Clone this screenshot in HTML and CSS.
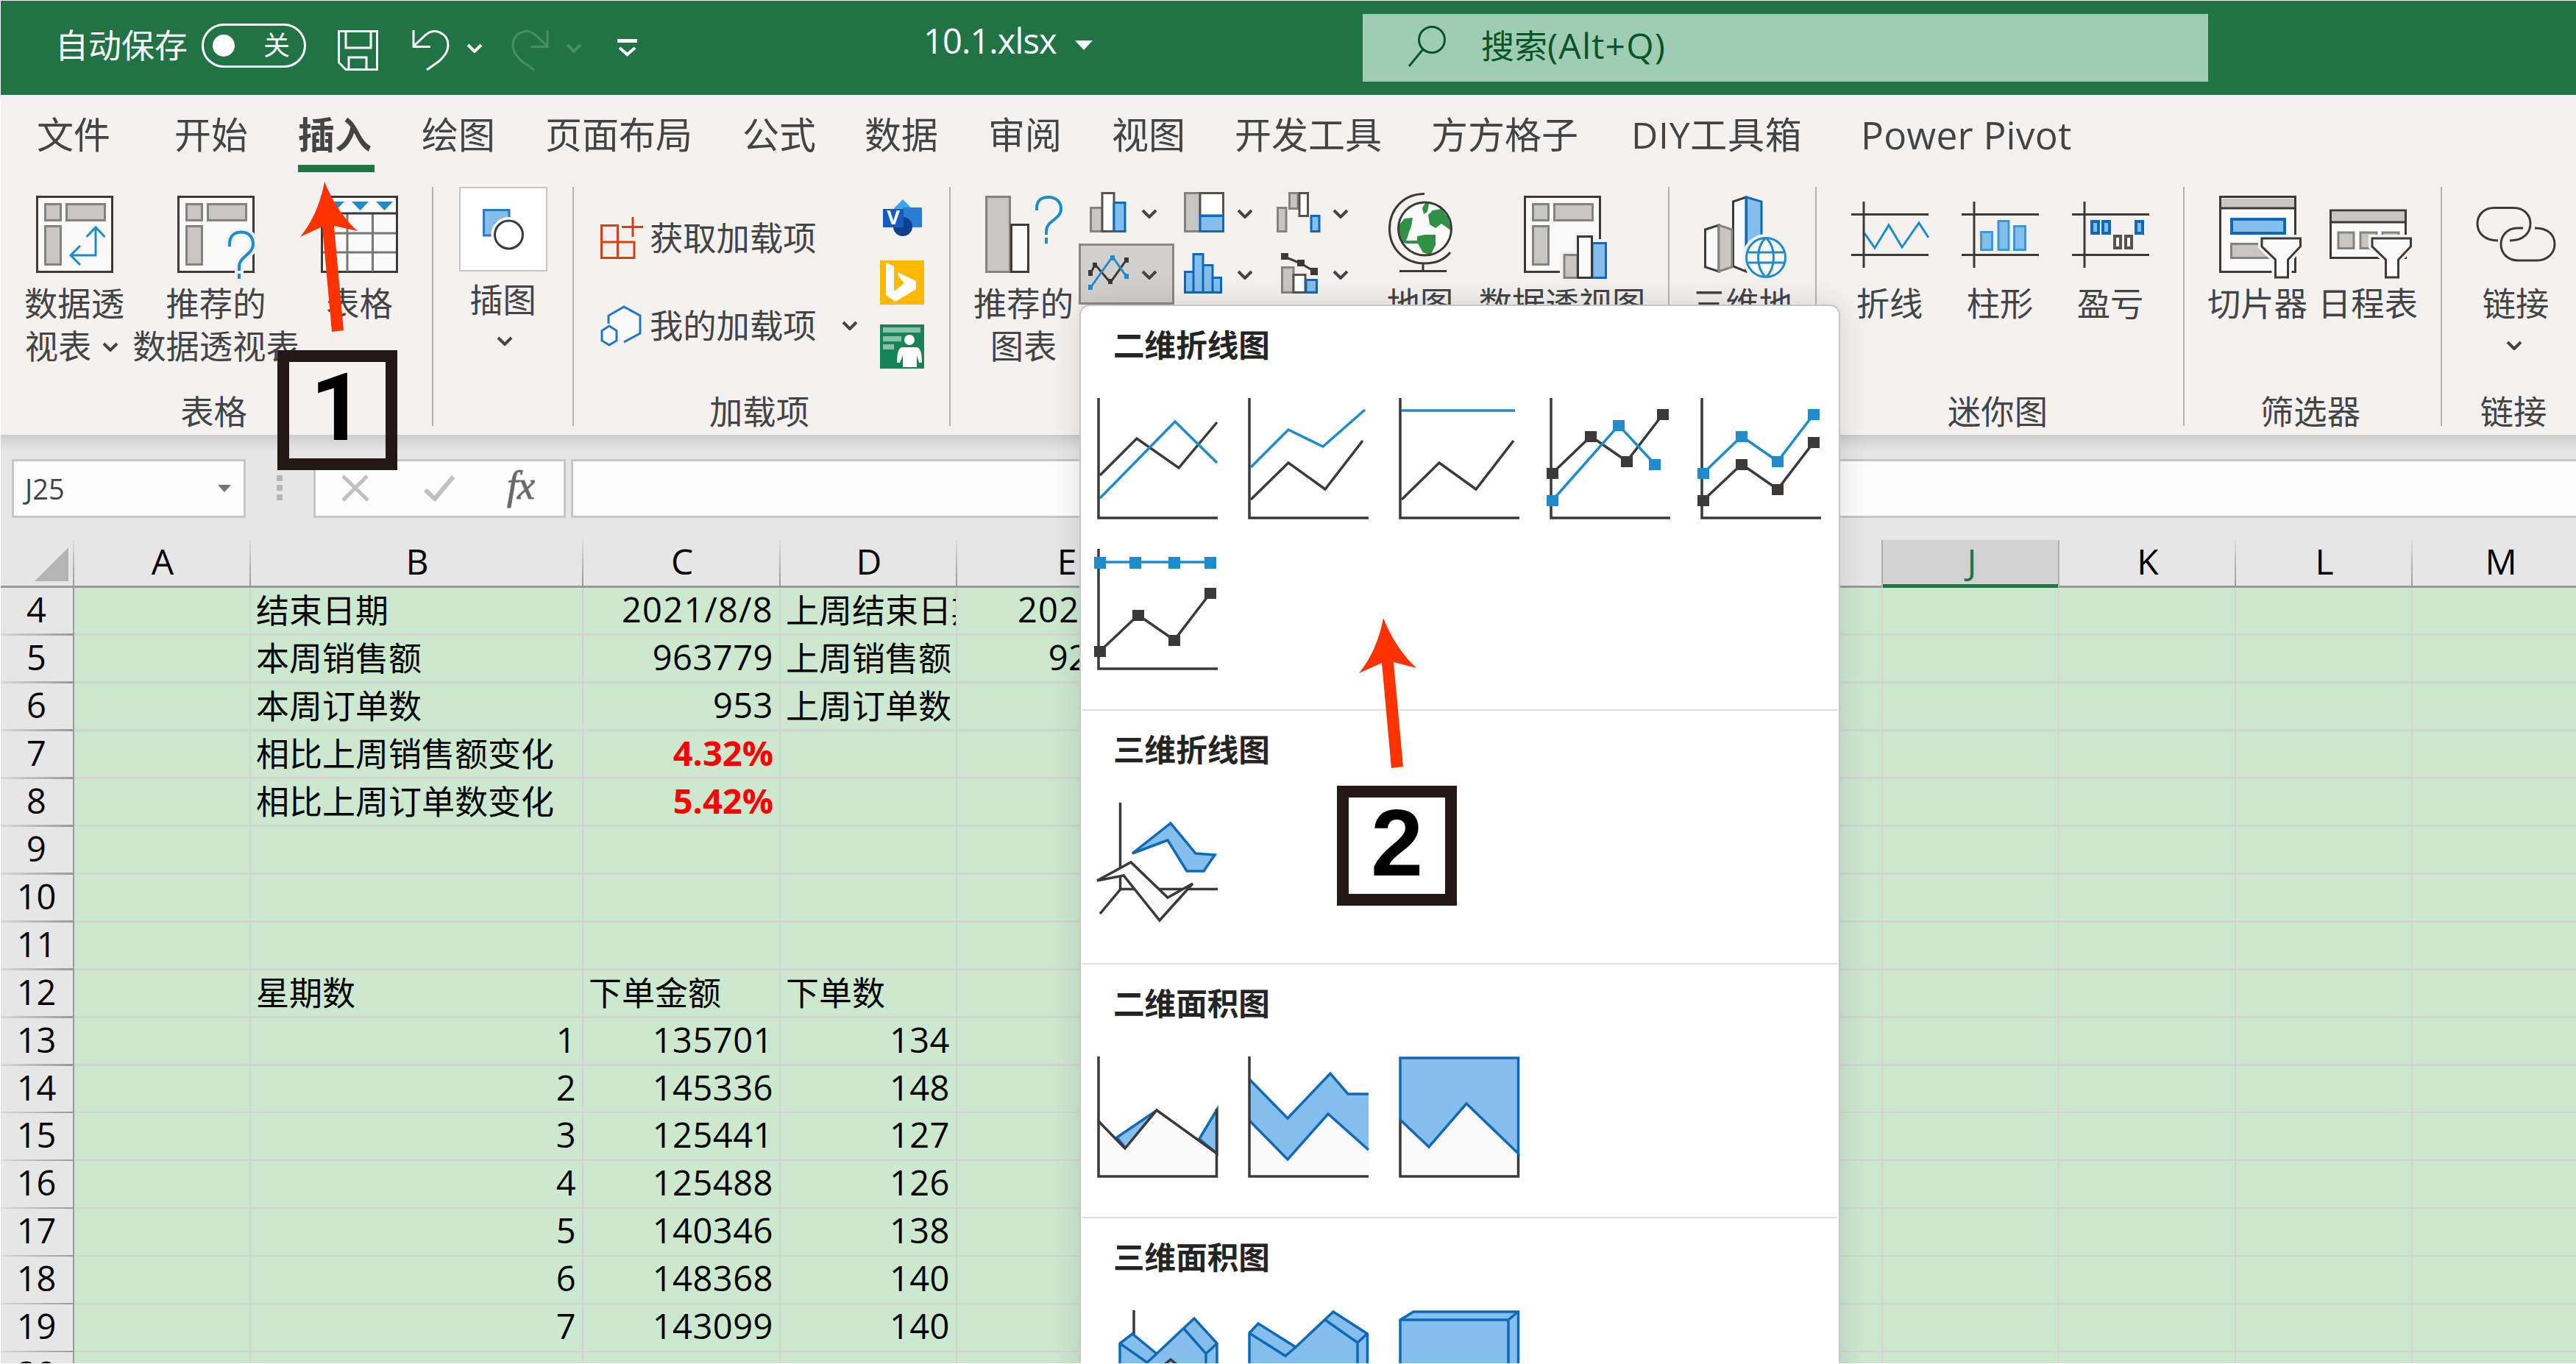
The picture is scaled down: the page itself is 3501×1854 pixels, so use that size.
FILE: index.html
```html
<!DOCTYPE html>
<html lang="zh-CN">
<head>
<meta charset="utf-8">
<title>10.1.xlsx</title>
<link rel="stylesheet" href="styles.css">
</head>
<body>
<svg class="defs" width="0" height="0">
  <symbol id="chev" viewBox="0 0 22 13"><path d="M2 2L11 11L20 2" fill="none" stroke="currentColor" stroke-width="4"/></symbol>
  <symbol id="pivot" viewBox="0 0 105 105">
    <path class="pl" d="M1.5 1.5H103.5V103.5H1.5Z"/>
    <path class="gr" d="M12.500 11.500H33.500V33.500H12.500ZM41.500 11.500H93.500V33.500H41.500ZM12.500 41.500H33.500V93.500H12.500Z"/>
  </symbol>
  <symbol id="frame" viewBox="0 0 105 118"><path class="dk" d="M17 8V98M0 25.500H105M0 80.500H105"/></symbol>
  <symbol id="funnel" viewBox="0 0 120 118"><path d="M58 58H110.500V69L93.500 87V111H76.500V87L58 69Z" class="halo"/><path class="pl" d="M58 58H110.500V69L93.500 87V111H76.500V87L58 69Z"/></symbol>
</svg>
<div class="app">
  <header class="titlebar">
    <span class="autosave">自动保存</span>
    <span class="toggle"><i class="knob"></i><b>关</b></span>
    <svg class="ti" width="55" height="55"><path class="w" d="M1.500 1.500H53.500V53.500H11L1.500 44ZM11 2V24H45V2M15 53V37H39V53"/></svg>
    <svg class="ti" width="52" height="55"><path class="w" d="M2 0V22.500H25M2 22L19 6C32 -4 49 5 49 20C49 30 43 36 37 42L20 54"/></svg>
    <svg class="tc" width="22" height="13"><use href="#chev"/></svg>
    <svg class="ti dim" width="52" height="55"><path class="w" d="M49 0V22.500H26M49 22L32 6C19 -4 2 5 2 20C2 30 8 36 14 42L31 54"/></svg>
    <svg class="tc dim" width="22" height="13"><use href="#chev"/></svg>
    <svg class="tc" width="27" height="24"><path d="M0 0H27V5H0Z" fill="#fff"/><path d="M3 12L13.500 21L24 12" fill="none" stroke="#fff" stroke-width="4"/></svg>
    <span class="fname">10.1.xlsx</span>
    <svg width="25" height="13"><path d="M0 0H24L12 13Z" fill="#fff"/></svg>
    <div class="search">
      <svg width="54" height="58"><circle cx="33" cy="20" r="17.500"/><path d="M21 33L2 56"/></svg>
      <span>搜索<em>(Alt+Q)</em></span>
    </div>
  </header>

  <nav class="tabs">
    <a>文件</a><a>开始</a><a class="on">插入</a><a>绘图</a><a>页面布局</a><a>公式</a><a>数据</a><a>审阅</a><a>视图</a><a>开发工具</a><a>方方格子</a><a class="diy">DIY工具箱</a><a class="lat">Power Pivot</a>
  </nav>

  <div class="ribbon">
    <section class="group g1">
      <div class="body">
        <div class="btn b160">
          <svg class="ic" width="105" height="118"><use href="#pivot" width="105" height="105"/><path class="bl" d="M81 43V81H47M68.500 56L81 43L93.500 56M60 68L47 81L60 94"/></svg>
          <span>数据透</span><span class="more">视表<svg width="22" height="13"><use href="#chev"/></svg></span>
        </div>
        <div class="btn b225">
          <svg class="ic" width="105" height="118"><use href="#pivot" width="105" height="105"/><path fill="none" stroke="#f3f2f1" stroke-width="12" d="M71 69V66C71 54 78 49.500 87 49.500C97 49.500 103 56 103 66C103 80 84 82 84 97V114"/><path class="bl w4" d="M71 69V66C71 54 78 49.500 87 49.500C97 49.500 103 56 103 66C103 80 84 82 84 97V102M84 106V113"/></svg>
          <span>推荐的</span><span>数据透视表</span>
        </div>
        <div class="btn b165">
          <svg class="ic" width="105" height="118"><path class="pl" d="M1.500 1.500H103.500V103.500H1.500Z"/><path d="M3 51H102M3 77H102M36 25V103M70.500 25V103" stroke="#797774" stroke-width="3"/><path class="dk" d="M2 24H103"/><path d="M9 8H32L20.500 20ZM42 8H65L53.500 20ZM75 8H98L86.500 20Z" fill="#1e8bcd"/></svg>
          <span>表格</span>
        </div>
      </div>
      <footer>表格</footer>
    </section>

    <section class="group g2">
      <div class="body">
        <div class="btn illus">
          <svg class="tile" width="120" height="115"><path d="M33.500 31.500H68V50H50V66H33.500Z" fill="#83beec" stroke="#2a7ac4" stroke-width="3"/><circle cx="67.500" cy="65" r="24" fill="#fff"/><circle cx="67.500" cy="65" r="19" fill="#fff" stroke="#3b3a38" stroke-width="3"/></svg>
          <span>插图</span><svg class="dn" width="22" height="13"><use href="#chev"/></svg>
        </div>
      </div>
      <footer></footer>
    </section>

    <section class="group g3">
      <div class="body">
        <div class="addins">
          <div class="line"><svg width="60" height="58"><path d="M1.500 11.500H23.500V55.500H1.500ZM1.500 34H46V55.500H23.500V34M44 0V27M29 13.500H58" fill="none" stroke="#d9400a" stroke-width="3"/></svg><span>获取加载项</span></div>
          <div class="line"><svg width="60" height="56"><path d="M11 25V14L32 2L54 14V38L32 50" fill="#fafafa" stroke="#1e78c8" stroke-width="3"/><path d="M12 28L22 34.500V48L12 54L2 48V34.500Z" fill="#fafafa" stroke="#1e78c8" stroke-width="3"/></svg><span>我的加载项</span><svg class="mr" width="22" height="13"><use href="#chev"/></svg></div>
        </div>
        <div class="apps">
          <svg width="60" height="60"><path d="M31 5L43 17V36H19V17Z" fill="#41a5ee"/><path d="M31 16H57V43H31Z" fill="#2b7cd3"/><circle cx="31" cy="42" r="13" fill="#103f91"/><path d="M4 18H32V43H4Z" fill="#185abd"/><text x="18" y="39" class="vs">V</text></svg>
          <svg width="60" height="60"><path d="M0 0H60V60H0Z" fill="#ffb900"/><path d="M8 3L19 8V40L29 34L24 28V16L49 28V39L21 56L8 47Z" fill="#fff"/><path d="M19 24L24 20L33 31L19 42Z" fill="#ffb900"/></svg>
          <svg width="60" height="60"><path d="M0 0H60V60H0Z" fill="#178457"/><path d="M4 4H55V11H4ZM4 16H29V23H4ZM4 27H19V34H4Z" fill="#8bc1ab"/><circle cx="40" cy="21" r="7" fill="#fff"/><path d="M30 31H50Q57 32 57 52H53L50 42V58H31V42L27 52H23Q23 32 30 31Z" fill="#fff"/></svg>
        </div>
      </div>
      <footer>加载项</footer>
    </section>

    <section class="group g4">
      <div class="body">
        <div class="btn b144">
          <svg class="ic" width="105" height="118"><path class="gr" d="M1.500 1.500H33.500V103.500H1.500Z"/><path class="pl" d="M35.500 39.500H58.500V103.500H35.500Z"/><path class="bl w4" d="M70 20V17C70 6 77 2 86 2C96 2 103 8 103 18C103 32 83 34 83 48V53M83 57V65"/></svg>
          <span>推荐的</span><span>图表</span>
        </div>
        <div class="minis">
          <svg width="130" height="83"><path class="gr" d="M16.500 34.500H32V66.500H16.500Z"/><path class="wh" d="M32 14.500H48V66.500H32Z"/><path class="bf" d="M48 27.500H63V66.500H48Z"/><use href="#chev" x="85" y="36" width="22" height="13"/></svg>
          <svg width="130" height="83"><path class="gr" d="M14.500 14.500H35V66.500H14.500Z"/><path class="wh" d="M35 14.500H66.500V45H35Z"/><path class="bf" d="M35 45.500H66.500V66.500H35Z"/><use href="#chev" x="85" y="36" width="22" height="13"/></svg>
          <svg width="130" height="83"><path class="gr" d="M10.500 34.500H22V66.500H10.500ZM26.500 14.500H38V35.500H26.500Z"/><path class="wh" d="M40 14.500H51.500V45.500H40Z"/><path class="bf" d="M56 45.500H67V66.500H56Z"/><use href="#chev" x="85" y="36" width="22" height="13"/></svg>
          <svg class="sel" width="130" height="83"><path class="dk" d="M16 42L22 28L43 53L65 22"/><path class="bl" d="M16 60L46 18L65 45"/><path d="M13 36H19V44H13ZM19 26H25V33H19ZM40 48H46V55H40ZM62 19H68V26H62Z" fill="#3b3a38"/><path d="M13 56H19V63H13ZM43 16H49V23H43ZM62 41H68V48H62Z" fill="#1e8bcd"/><use href="#chev" x="85" y="36" width="22" height="13"/></svg>
          <svg width="130" height="83"><path class="bf" d="M14.500 38.500H26V66.500H14.500ZM26 14.500H39V66.500H26ZM39 29.500H52V66.500H39ZM52 46.500H63.500V66.500H52Z"/><use href="#chev" x="85" y="36" width="22" height="13"/></svg>
          <svg width="130" height="83"><path class="gr" d="M16.500 32.500H32V66.500H16.500Z"/><path class="wh" d="M32 42.500H48V66.500H32Z"/><path class="bf" d="M49 49.500H63.500V66.500H49Z"/><path class="dk" d="M20 18L42 27L60 38"/><path d="M15 13H25V22H15ZM37 22H47V31H37ZM55 33H65V43H55Z" fill="#3b3a38"/><use href="#chev" x="85" y="36" width="22" height="13"/></svg>
        </div>
        <div class="btn b128">
          <svg class="ic" width="87" height="118"><g transform="translate(0 -5)"><circle cx="49.500" cy="50" r="36" fill="#fafafa"/><path fill="#2f9146" d="M50 15L55 16L53 27L48 30L46 22ZM54 31L60 25L72 23L81 35L86 53L79 48L72 43L64 49L56 44ZM15 44L22 36L33 35L31 47L28 54L26 61L24 66L39 66V60L50 58L64 58L64 72L57 86L47 82L40 70L24 70L18 68L13 52Z"/><circle cx="49.500" cy="50" r="36" fill="none" stroke="#3b3a38" stroke-width="3"/><path class="dk" d="M49 2.500C20 2.500 1.500 24 1.500 50C1.500 77 22 97 49 97C64 97 76 92 84 82M47 97V106M15 107.500H79"/></g></svg>
          <span>地图</span>
        </div>
        <div class="btn b258">
          <svg class="ic" width="105" height="118"><use href="#pivot" width="105" height="105"/><path d="M49 75H69V49H98V59H118V118H49Z" fill="#f3f2f1"/><path class="gr" d="M55 80.500H73V111.500H55Z"/><path class="bf" d="M93 64.500H111.500V111.500H93Z"/><path class="pl" d="M73.500 55.500H92.500V111.500H73.500Z"/></svg>
          <span>数据透视图</span>
        </div>
      </div>
      <footer></footer>
    </section>

    <section class="group g5">
      <div class="body">
        <div class="btn b200">
          <svg class="ic" width="105" height="118"><path class="pl" d="M39.500 8L57 2V103L39.500 96Z"/><path class="pl" d="M1.500 46L20 40V103L1.500 97Z"/><path class="gr" d="M20 40L38 46V97L20 103Z"/><path class="bf" d="M57.500 2L78 8V80H57.500Z"/><circle cx="84" cy="84" r="32" fill="#f3f2f1"/><circle cx="84" cy="84" r="26.500" fill="#fafafa"/><path class="bl" d="M57.500 84A26.500 26.500 0 1 0 110.500 84A26.500 26.500 0 1 0 57.500 84M84 57C70 70 70 98 84 111M84 57C98 70 98 98 84 111M60 77H108M60 91H108"/></svg>
          <span>三维地</span><span>图</span>
        </div>
      </div>
      <footer></footer>
    </section>

    <section class="group g6">
      <div class="body">
        <div class="btn b150"><svg class="ic" width="105" height="118"><path class="bl" d="M18 51L32 71L51 40L69 70L92 37L105 57"/><use href="#frame"/></svg><span>折线</span></div>
        <div class="btn b150"><svg class="ic" width="105" height="118"><use href="#frame"/><path class="bf lt" d="M26.500 49.500H41.500V73.500H26.500ZM50 34.500H64V73.500H50ZM71.500 41.500H86.500V73.500H71.500Z"/></svg><span>柱形</span></div>
        <div class="btn b150"><svg class="ic" width="105" height="118"><use href="#frame"/><path class="bf w4" d="M27 35H36V51H27ZM42 35H51V51H42ZM87 35H96V51H87Z"/><path class="wh w4" d="M58 55H66V71H58ZM73 55H81V71H73Z"/></svg><span>盈亏</span></div>
      </div>
      <footer>迷你图</footer>
    </section>

    <section class="group g7">
      <div class="body">
        <div class="btn b150"><svg class="ic" width="105" height="118"><path class="pl" d="M1.500 1.500H103.500V103.500H1.500Z"/><path d="M3 4H102V16H3Z" fill="#c8c6c4"/><path class="dk" d="M2 17H103"/><path class="bf w4" d="M17 32H89V51H17Z"/><path class="gr" d="M16.500 65.500H89V84.500H16.500Z"/><use href="#funnel" width="120" height="118"/></svg><span>切片器</span></div>
        <div class="btn b150"><svg class="ic" width="105" height="118"><path class="pl" d="M1.500 20H103.500V84.500H1.500Z"/><path d="M3 22H102V35H3Z" fill="#c8c6c4"/><path class="dk" d="M2 36H103"/><path class="gr" d="M12 50H33V71.500H12ZM42 50H64V71.500H42ZM72 50H94V71.500H72Z"/><use href="#funnel" width="120" height="118"/></svg><span>日程表</span></div>
      </div>
      <footer>筛选器</footer>
    </section>

    <section class="group g8">
      <div class="body">
        <div class="btn b200">
          <svg class="ic" width="108" height="118"><path class="dk" d="M30 61C12 61 2 51 2 38C2 25 12 16.500 25 16.500H51C64 16.500 74 25 74 38C74 51 64 61 46 61M64 44H56C43 44 34 54 34 66C34 79 44 88 57 88H83C96 88 107 79 107 66C107 53 98 44 80 44"/></svg>
          <span>链接</span><svg class="dn lk" width="22" height="13"><use href="#chev"/></svg>
        </div>
      </div>
      <footer>链接</footer>
    </section>
  </div>

  <div class="fbar">
    <div class="namebox"><span>J25</span><svg width="18" height="10"><path d="M0 0H18L9 10Z" fill="#777"/></svg></div>
    <div class="dots"><i></i><i></i><i></i></div>
    <div class="fx">
      <svg width="38" height="36"><path d="M2 1L36 34M35 1L2 34" stroke="#c0c0c0" stroke-width="5" fill="none"/></svg>
      <svg width="42" height="36"><path d="M2 20L15 32L40 2" stroke="#c0c0c0" stroke-width="6" fill="none"/></svg>
      <em>fx</em>
    </div>
    <div class="formula"></div>
  </div>

  <div class="sheet">
    <div class="row heads">
      <span class="corner"><svg width="46" height="46"><path d="M46 0V46H0Z" fill="#b4b4b4"/></svg></span>
      <span>A</span><span>B</span><span>C</span><span>D</span><span>E</span><span>F</span><span>G</span><span>H</span><span>I</span><span class="cur">J</span><span>K</span><span>L</span><span>M</span>
    </div>
    <div class="row"><b>4</b><span class="c2">结束日期</span><span class="c3 n date">2021/8/8</span><span class="c4 clip">上周结束日期</span><span class="c5 n date">2021/8/1</span></div>
    <div class="row"><b>5</b><span class="c2">本周销售额</span><span class="c3 n">963779</span><span class="c4">上周销售额</span><span class="c5 n">923868</span></div>
    <div class="row"><b>6</b><span class="c2">本周订单数</span><span class="c3 n">953</span><span class="c4">上周订单数</span></div>
    <div class="row"><b>7</b><span class="c2">相比上周销售额变化</span><span class="c3 n red">4.32%</span></div>
    <div class="row"><b>8</b><span class="c2">相比上周订单数变化</span><span class="c3 n red">5.42%</span></div>
    <div class="row"><b>9</b></div>
    <div class="row"><b>10</b></div>
    <div class="row"><b>11</b></div>
    <div class="row"><b>12</b><span class="c2">星期数</span><span class="c3">下单金额</span><span class="c4">下单数</span></div>
    <div class="row"><b>13</b><span class="c2 n">1</span><span class="c3 n">135701</span><span class="c4 n">134</span></div>
    <div class="row thin"><b>14</b><span class="c2 n">2</span><span class="c3 n">145336</span><span class="c4 n">148</span></div>
    <div class="row thin"><b>15</b><span class="c2 n">3</span><span class="c3 n">125441</span><span class="c4 n">127</span></div>
    <div class="row thin"><b>16</b><span class="c2 n">4</span><span class="c3 n">125488</span><span class="c4 n">126</span></div>
    <div class="row thin"><b>17</b><span class="c2 n">5</span><span class="c3 n">140346</span><span class="c4 n">138</span></div>
    <div class="row thin"><b>18</b><span class="c2 n">6</span><span class="c3 n">148368</span><span class="c4 n">140</span></div>
    <div class="row thin"><b>19</b><span class="c2 n">7</span><span class="c3 n">143099</span><span class="c4 n">140</span></div>
    <div class="row thin"><b>20</b></div>
  </div>

  <div class="menu">
    <section class="tall">
      <h3>二维折线图</h3>
      <div class="charts">
        <svg class="ch"><path class="dk" d="M4 105L54 55L111 95L163 33"/><path class="bl" d="M4 136L106 32L163 88"/><path class="ax" d="M2 0V163H164"/></svg>
        <svg class="ch"><path class="dk" d="M4 138L55 88L105 124L156 58"/><path class="bl" d="M4 94L55 43L102 66L159 16"/><path class="ax" d="M2 0V163H164"/></svg>
        <svg class="ch"><path class="dk" d="M4 138L55 88L105 124L156 58"/><path class="bl w4" d="M4 17H158"/><path class="ax" d="M2 0V163H164"/></svg>
        <svg class="ch"><path class="ax" d="M2 0V163H164"/><path class="dk" d="M4 102L56 52L105 86L154 22"/><path class="bl" d="M4 139L94 37L143 90"/><path fill="#3b3a38" d="M-4 95H12V110H-4ZM48 45H64V60H48ZM97 79H113V94H97ZM146 15H162V30H146Z"/><path fill="#1e8bcd" d="M-4 132H12V147H-4ZM86 30H102V45H86ZM135 83H151V98H135Z"/></svg>
        <svg class="ch"><path class="ax" d="M2 0V163H164"/><path class="dk" d="M4 139L56 90L105 124L154 60"/><path class="bl" d="M4 102L56 52L105 86L154 22"/><path fill="#1e8bcd" d="M-4 95H12V110H-4ZM48 45H64V60H48ZM97 79H113V94H97ZM146 15H162V30H146Z"/><path fill="#3b3a38" d="M-4 132H12V147H-4ZM48 83H64V98H48ZM97 117H113V132H97ZM146 53H162V68H146Z"/></svg>
        <svg class="ch"><path class="ax" d="M2 0V163H164"/><path class="dk" d="M4 139L56 90L105 124L154 60"/><path class="bl" d="M4 18H154"/><path fill="#1e8bcd" d="M-4 11H12V27H-4ZM44 11H60V27H44ZM97 11H113V27H97ZM146 11H162V27H146Z"/><path fill="#3b3a38" d="M-4 132H12V147H-4ZM48 83H64V98H48ZM97 117H113V132H97ZM146 53H162V68H146Z"/></svg>
      </div>
    </section>
    <section>
      <h3>三维折线图</h3>
      <div class="charts">
        <svg class="ch"><path class="dk" d="M31.500 0V118L4 151M31 117.500H164"/><path class="bf" d="M48 69L100 28L134 69L160 71L145 93H122L96 51Z"/><path class="pl" d="M0 106L46 81L96 129L130 110L85 160L36 99Z"/></svg>
      </div>
    </section>
    <section>
      <h3>二维面积图</h3>
      <div class="charts">
        <svg class="ch"><path class="bf" d="M27 110L80 74L39 125ZM139 112L163 72V132Z"/><path fill="#fafafa" d="M2 88L38 126L81 73L163 132V163H2Z"/><path class="dk" d="M2 88L38 125L81 73L163 132"/><path class="ax" d="M2 0V163H162.500V71"/></svg>
        <svg class="ch"><path fill="#fafafa" d="M2 88L54 141L109 78L165 127V163H2Z"/><path fill="#83beec" d="M3 32L54 85L112 23L136 51H164V127L109 78L54 141L3 88Z"/><path class="bs" d="M3 32L54 84L112 23L136 51H164M3 88L54 140L109 78L164 127"/><path class="ax" d="M2 0V163H164"/></svg>
        <svg class="ch"><path fill="#fafafa" d="M2 60H162V163H2Z"/><path class="ax" d="M2 86V163H162.500V132"/><path class="bf" d="M2 2H162.500V132L92 64L41 123L2 86Z"/></svg>
      </div>
    </section>
    <section class="last">
      <h3>三维面积图</h3>
      <div class="charts">
        <svg class="ch"><path class="dk" d="M50 0V36"/><path class="bf" d="M31 45L48 32L81 59L132 11L163 45V180H31Z"/><path class="bs" d="M31 45L68 71L81 59M118 25L148 59L163 45M148 59V180"/><path class="dk" d="M90 75L100 67L110 75"/></svg>
        <svg class="ch"><path class="bf" d="M2 31L14 18L65 50L116 2L162.500 32V180H2Z"/><path class="bs" d="M2 31L51 62L65 50M105 13L149 44L162 32M149 44V180"/></svg>
        <svg class="ch"><path class="bf" d="M2 13L20 2H162.500V180H2Z"/><path class="bs w4" d="M2 13H149L162 2M149 13V180"/></svg>
      </div>
    </section>
  </div>

  <svg class="arrow a1" width="80" height="206"><path d="M33 0Q50 42 78 67L46 60L59 202L43 204L30 61L0 75Q25 44 33 0Z"/></svg>
  <div class="mark m1">1</div>
  <svg class="arrow a2" width="80" height="206"><path d="M33 0Q50 42 78 68L47 60L60 202L44 204L31 61L0 75Q25 44 33 0Z"/></svg>
  <div class="mark m2">2</div>
</div>
</body>
</html>
```
FILE: styles.css
```css
* { box-sizing: border-box; }
html, body { margin: 0; padding: 0; }
body { font-family: "Open Sans", "Noto Sans CJK SC", sans-serif; color: #444; }
svg { display: block; overflow: visible; }
em { font-style: normal; }
.defs { position: absolute; }
.app { position: relative; width: 3501px; height: 1854px; overflow: hidden; background: #e6e6e6; }
.app::after { content: ""; position: absolute; inset: 0; border: 1px solid #fff; border-right: 0; }

/* icon paint */
.pl { fill: #fafafa; stroke: #3b3a38; stroke-width: 3; }
.wh { fill: #fff; stroke: #55534f; stroke-width: 3; }
.gr { fill: #c8c6c4; stroke: #858380; stroke-width: 3; }
.dk { fill: none; stroke: #3b3a38; stroke-width: 3; }
.bl { fill: none; stroke: #1e8bcd; stroke-width: 3; }
.bf { fill: #83beec; stroke: #0f69b7; stroke-width: 3; }
.bs { fill: none; stroke: #0f69b7; stroke-width: 3; }
.lt { stroke: #3d9ad6; }
.w4 { stroke-width: 4; }
.halo { fill: none; stroke: #f3f2f1; stroke-width: 10; }
.ax { fill: none; stroke: #3b3a38; stroke-width: 3.5; }
.charts .dk, .charts .bl, .charts .bf, .charts .bs, .charts .pl { stroke-width: 3.5; }

/* title bar */
.titlebar { height: 129px; padding: 0 0 6px 75px; background: #217346; color: #fff; display: grid; grid-template-columns: 199px 185px 101px 74px 61px 74px 70px 416px 206px 391px 1149px; align-items: center; font-size: 45px; line-height: 60px; }
.toggle { width: 142px; height: 60px; border: 3px solid #fff; border-radius: 30px; display: flex; align-items: center; justify-content: space-between; padding: 0 19px 0 12px; }
.toggle b { font-weight: 400; font-size: 36px; line-height: 50px; }
.knob { width: 30px; height: 30px; border-radius: 50%; background: #fff; }
.ti { margin-top: 14px; }
.tc { margin-top: 7px; color: #fff; }
.w { fill: none; stroke: #fff; stroke-width: 3; }
.dim { opacity: .18; }
.fname { font-size: 47px; letter-spacing: -.9px; margin-bottom: 14px; }
.search { height: 92px; margin-top: 7px; background: #9fcdb3; color: #0a5428; display: flex; align-items: center; padding: 0 0 5px 61px; }
.search svg { fill: none; stroke: #0a5428; stroke-width: 3; margin-right: 46px; }
.search em { font-size: 48px; letter-spacing: 1.2px; }

/* ribbon tabs */
.tabs { height: 125px; background: #f3f2f1; padding-left: 50px; display: grid; grid-template-columns: 187px 168px 168px 168px 268px 166px 168px 168px 167px 267px 272px 312px 400px; align-items: start; justify-items: start; font-size: 50px; line-height: 82px; white-space: nowrap; }
.tabs a { padding-top: 13px; height: 105px; }
.tabs .on { font-weight: 700; border-bottom: 10px solid #217346; width: 104px; }
.tabs .lat { font-size: 51.5px; letter-spacing: .2px; }
.tabs .diy { letter-spacing: .7px; }

/* ribbon groups */
.ribbon { height: 337px; background: #f3f2f1; display: flex; font-size: 45.3px; line-height: 58px; }
.group { flex: none; height: 325px; border-right: 2px solid #b5b3b1; display: flex; flex-direction: column; justify-content: space-between; }
.body { display: flex; height: 260px; white-space: nowrap; }
.group footer { text-align: center; line-height: 38px; padding-right: 6px; }
.g1 { width: 589px; padding-left: 21px; }
.g1 footer { margin-left: -21px; }
.g2 { width: 191px; }
.g3 { width: 512px; }
.g4 { width: 977px; padding-left: 27px; }
.g5 { width: 200px; }
.g6 { width: 500px; padding-left: 24px; }
.g6 footer { margin-left: -24px; }
.g7 { width: 350px; padding-left: 24px; }
.g7 footer { margin-left: -24px; }
.g8 { width: 202px; }
.btn { display: flex; flex-direction: column; align-items: center; }
.ic { margin-top: 12px; flex: none; }
.b128 { width: 128px; margin-left: 10px; }
.b144 { width: 144px; }
.b150 { width: 150px; }
.b160 { width: 160px; }
.b165 { width: 165px; }
.b200 { width: 200px; }
.b225 { width: 225px; }
.b258 { width: 258px; }
.more { display: flex; align-items: center; gap: 15px; margin-right: 7px; }
.illus { width: 189px; }
.tile { background: #fff; outline: 2px solid #c8c6c4; outline-offset: -2px; margin-bottom: 10px; }
.dn { margin: 20px 0 0 4px; }
.dn.lk { margin: 21px 4px 0 0; }
.addins { width: 416px; padding: 10px 0 0 36px; }
.line { height: 119px; display: flex; align-items: center; gap: 7px; }
.mr { margin-left: 27px; }
.apps { padding-top: 12px; display: flex; flex-direction: column; gap: 27.5px; }
.vs { font: 700 27px "Open Sans", sans-serif; fill: #fff; text-anchor: middle; }
.minis { width: 390px; height: 166px; margin: -6px 0 0 3px; display: grid; grid-template-columns: repeat(3, 130px); grid-template-rows: 83px 83px; }
.sel { background: #d2d0ce; outline: 3px solid #8a8886; outline-offset: -3px; }

/* formula bar */
.fbar { height: 143px; padding-top: 33px; display: flex; align-items: flex-start; background: linear-gradient(#cdcdcd, #e6e6e6 22px); }
.fbar > div { height: 80px; }
.namebox, .fx, .formula { background: #fdfdfd; border: 3px solid #c6c6c6; display: flex; align-items: center; }
.namebox { width: 318px; margin-left: 16px; padding: 0 17px 0 15px; justify-content: space-between; font-size: 38px; }
.dots { width: 92px; padding: 22px 0 0 42px; display: flex; flex-direction: column; gap: 5px; }
.dots i { width: 8px; height: 8px; background: #b5b5b5; }
.fx { width: 343px; padding-left: 35px; }
.fx svg + svg { margin-left: 74px; }
.fx em { margin: -8px 0 0 71px; font: italic 400 54px/60px "Liberation Serif", serif; color: #666; -webkit-text-stroke: 1px #777; letter-spacing: -1px; }
.formula { flex: 1; margin-left: 7px; border-right: 0; }

/* worksheet */
.sheet { background: #cce8cf; color: #000; font-size: 45px; height: 1120px;
  background-image: linear-gradient(#d4d4d4, #d4d4d4), linear-gradient(#d4d4d4, #d4d4d4), linear-gradient(#d4d4d4, #d4d4d4), linear-gradient(#d4d4d4, #d4d4d4), linear-gradient(#d4d4d4, #d4d4d4), linear-gradient(#d4d4d4, #d4d4d4), linear-gradient(#d4d4d4, #d4d4d4), linear-gradient(#d4d4d4, #d4d4d4);
  background-size: 2px 100%; background-repeat: no-repeat;
  background-position: 339px 0, 791px 0, 1059px 0, 1299px 0, 2557px 0, 2797px 0, 3037px 0, 3277px 0; }
.row { height: 65px; display: grid; grid-template-columns: 101px 240px 452px 268px 240px 298px repeat(8, 240px); border-bottom: 3px solid #d4d4d4; line-height: 62px; white-space: nowrap; }
.row b { grid-column: 1; grid-row: 1; margin-bottom: -3px; font-weight: 400; font-size: 47px; line-height: 58px; text-align: center; background: linear-gradient(90deg, #d8d8d8, #999) 0 100% / 100% 3px no-repeat, #e6e6e6; border-right: 2px solid #999; }
.row span { grid-row: 1; padding: 0 10px 0 7px; height: 62px; }
.row .clip { overflow-x: clip; margin-right: 2px; }
.c2 { grid-column: 3; }
.c3 { grid-column: 4; }
.c4 { grid-column: 5; }
.c5 { grid-column: 6; }
.row .n { font-size: 47px; line-height: 58px; text-align: right; letter-spacing: .5px; }
.row .date { letter-spacing: 1.3px; }
.row .red { color: #f00; font-weight: 700; letter-spacing: 0; }
.row.thin { border-bottom-width: 2px; }
.row:nth-child(12) { height: 64px; }
.row:last-child { height: 17px; border: 0; }
.row.heads { height: 65px; border-bottom: 3px solid #999; background: #e6e6e6; font-size: 48px; line-height: 57px; text-align: center; }
.row.heads span { padding: 0; background: linear-gradient(#dcdcdc, #999) 100% 0 / 2px 100% no-repeat, #e6e6e6; }
.row.heads .corner { padding: 10px 0 0 47px; }
.row.heads .cur { background: linear-gradient(#217346, #217346) 0 100% / 100% 5px no-repeat, #d2d2d2; color: #217346; height: 65px; margin-left: -2px; padding-left: 4px; border-left: 2px solid #b0b0b0; border-right: 2px solid #b0b0b0; }

/* chart gallery dropdown */
.menu { position: absolute; left: 1467px; top: 414px; width: 1034px; height: 1460px; background: #fff; border: 2px solid #c6c6c6; border-radius: 14px; box-shadow: 0 0 44px rgba(0, 0, 0, .13); }
.menu section { height: 345px; margin: 0 2px; padding: 22px 0 0 20px; border-bottom: 2px solid #dfdfdf; }
.menu .tall { height: 550px; }
.menu .last { border: 0; }
.menu h3 { margin: 0 0 43px 22px; font-size: 42.6px; line-height: 60px; color: #252423; font-weight: 700; }
.charts { display: grid; grid-template-columns: repeat(5, 164px); grid-auto-rows: 165px; gap: 40px 41px; }
.ch { width: 164px; height: 165px; }

/* callouts */
.arrow { position: absolute; fill: #ff3300; }
.a1 { left: 408px; top: 247px; }
.a2 { left: 1847px; top: 840px; }
.mark { position: absolute; width: 163px; height: 163px; border: 16px solid #231815; color: #000; font: 700 128px/124px "Liberation Sans", sans-serif; text-align: center; }
.m1 { left: 377px; top: 476px; font-family: Roboto, sans-serif; }
.m2 { left: 1817px; top: 1068px; }
```
